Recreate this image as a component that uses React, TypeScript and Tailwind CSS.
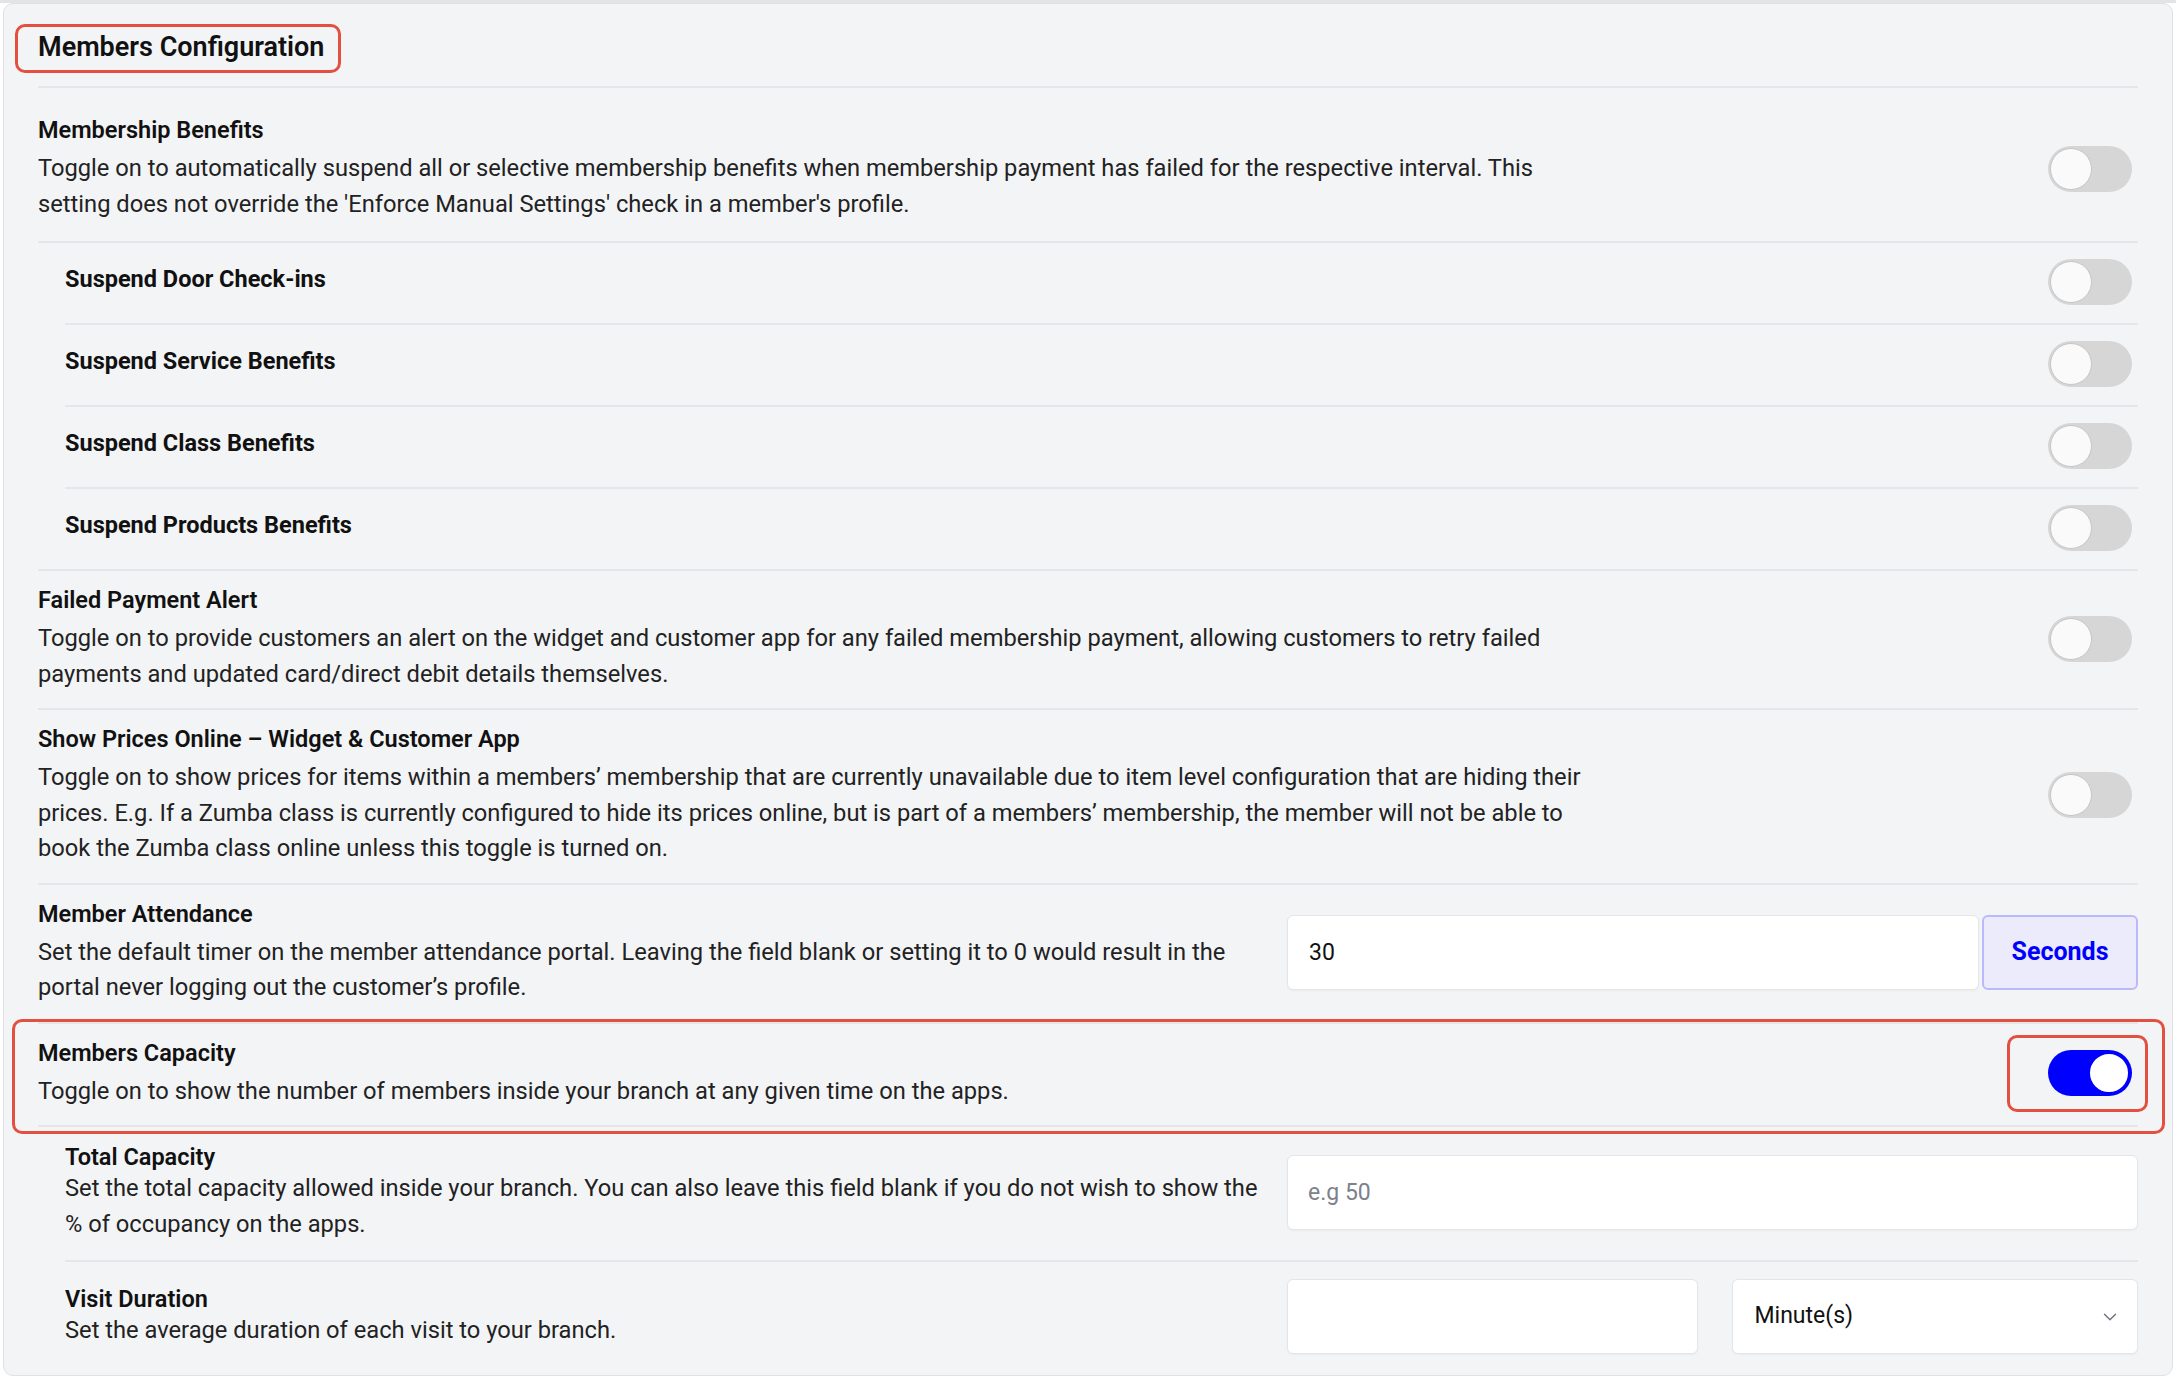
import { ChevronDown } from "lucide-react";

function Toggle({ on = false }: { on?: boolean }) {
  return (
    <div
      className={`flex h-[46px] w-[84px] shrink-0 items-center rounded-full p-[2px] ${
        on ? "justify-end bg-[#0000ff]" : "justify-start bg-[#d6d6d6]"
      }`}
    >
      <div
        className={`h-[42px] w-[42px] rounded-full ${
          on ? "border-2 border-[#0000ff] bg-white" : "border border-[#c6c6c6] bg-[#fafafa]"
        }`}
      />
    </div>
  );
}

const heading = "text-[23.5px] leading-[30px] font-semibold text-[#111]";
const body = "text-[23.7px] leading-[35.5px] text-[#222]";
const divider = "border-b-2 border-[#e4e6e9]";
const field =
  "h-[75px] rounded-[6px] border border-[#e3e5e8] bg-white shadow-[0_1px_2px_rgba(0,0,0,0.04)] text-[23px] text-[#111]";

const subItems = [
  "Suspend Door Check-ins",
  "Suspend Service Benefits",
  "Suspend Class Benefits",
  "Suspend Products Benefits",
];

export default function App() {
  return (
    <div className="min-h-screen border-t-[3px] border-[#e3e4e6] bg-white font-['Roboto',sans-serif]">
      <div className="mx-[3px] rounded-[10px] border border-[#dfe1e4] bg-[#f3f4f6] px-[34px]">
        {/* Header */}
        <div className={`${divider} pt-[26px] pb-[22px]`}>
          <span className="relative inline-block text-[27px] leading-[34px] font-semibold text-[#111]">
            Members Configuration
            <span className="pointer-events-none absolute -left-[23px] -right-[17px] -top-[6px] -bottom-[9px] rounded-[10px] border-[3px] border-[#e4503f]" />
          </span>
        </div>

        {/* Membership Benefits */}
        <div className={`flex items-center justify-between ${divider} pt-[27px] pb-[19px]`}>
          <div className="max-w-[1555px]">
            <div className={heading}>Membership Benefits</div>
            <p className={`${body} mt-[6px]`}>
              Toggle on to automatically suspend all or selective membership benefits when membership payment has
              failed for the respective interval. This setting does not override the 'Enforce Manual Settings' check
              in a member's profile.
            </p>
          </div>
          <div className="mr-[6px]">
            <Toggle />
          </div>
        </div>

        <div className={`${divider} pl-[27px]`}>
          {subItems.map((s, i) => (
            <div
              key={s}
              className={`flex items-center justify-between pt-[16px] pb-[18px] ${
                i < subItems.length - 1 ? divider : ""
              }`}
            >
              <span className="mb-[6px] text-[23.5px] leading-[30px] font-bold text-[#111]">{s}</span>
              <div className="mr-[6px]">
                <Toggle />
              </div>
            </div>
          ))}
        </div>

        {/* Failed Payment Alert */}
        <div className={`flex items-center justify-between ${divider} pt-[14px] pb-[16px]`}>
          <div className="max-w-[1555px]">
            <div className={heading}>Failed Payment Alert</div>
            <p className={`${body} mt-[6px]`}>
              Toggle on to provide customers an alert on the widget and customer app for any failed membership
              payment, allowing customers to retry failed payments and updated card/direct debit details themselves.
            </p>
          </div>
          <div className="mr-[6px]">
            <Toggle />
          </div>
        </div>

        {/* Show Prices Online */}
        <div className={`flex items-center justify-between ${divider} pt-[14px] pb-[16px]`}>
          <div className="max-w-[1555px]">
            <div className={heading}>Show Prices Online – Widget &amp; Customer App</div>
            <p className={`${body} mt-[6px]`}>
              Toggle on to show prices for items within a members’ membership that are currently unavailable due to
              item level configuration that are hiding their prices. E.g. If a Zumba class is currently configured to
              hide its prices online, but is part of a members’ membership, the member will not be able to book the
              Zumba class online unless this toggle is turned on.
            </p>
          </div>
          <div className="mr-[6px]">
            <Toggle />
          </div>
        </div>

        {/* Member Attendance */}
        <div className={`flex items-center gap-[26px] ${divider} pt-[14px] pb-[16px]`}>
          <div className="flex-1">
            <div className={heading}>Member Attendance</div>
            <p className={`${body} mt-[6px]`}>
              Set the default timer on the member attendance portal. Leaving the field blank or setting it to 0 would
              result in the portal never logging out the customer’s profile.
            </p>
          </div>
          <div className="flex w-[851px] shrink-0 gap-[3px]">
            <input readOnly value="30" className={`${field} min-w-0 flex-1 px-[21px] outline-none`} />
            <div className="flex h-[75px] w-[156px] items-center justify-center rounded-[6px] border-2 border-[#b9b9fb] bg-[#ebebfc] text-[25px] font-bold text-[#0000ff]">
              Seconds
            </div>
          </div>
        </div>

        {/* Members Capacity */}
        <div className={`relative flex items-center justify-between ${divider} pt-[14px] pb-[16px]`}>
          <div className="max-w-[1555px]">
            <div className={heading}>Members Capacity</div>
            <p className={`${body} mt-[6px]`}>
              Toggle on to show the number of members inside your branch at any given time on the apps.
            </p>
          </div>
          <div className="relative mr-[6px]">
            <Toggle on />
            <span className="pointer-events-none absolute -left-[41px] -right-[16px] -top-[15px] -bottom-[16px] rounded-[10px] border-[3px] border-[#e4503f]" />
          </div>
          <span className="pointer-events-none absolute -left-[26px] -right-[27px] -top-[5px] -bottom-[9px] rounded-[10px] border-[3px] border-[#e4503f]" />
        </div>

        {/* Capacity sub settings */}
        <div className="pl-[27px]">
          <div className={`flex items-center gap-[20px] ${divider} pt-[16px] pb-[18px]`}>
            <div className="flex-1">
              <div className="text-[23.5px] leading-[28px] font-semibold text-[#111]">Total Capacity</div>
              <p className={body}>
                Set the total capacity allowed inside your branch. You can also leave this field blank if you do not
                wish to show the % of occupancy on the apps.
              </p>
            </div>
            <input
              readOnly
              placeholder="e.g 50"
              className={`${field} w-[851px] shrink-0 px-[20px] outline-none placeholder:text-[#7c818a]`}
            />
          </div>

          <div className="flex items-center gap-[20px] pt-[17px] pb-[21px]">
            <div className="flex-1">
              <div className="text-[23.5px] leading-[28px] font-semibold text-[#111]">Visit Duration</div>
              <p className={body}>Set the average duration of each visit to your branch.</p>
            </div>
            <div className="flex w-[851px] shrink-0 gap-[34px]">
              <input readOnly className={`${field} min-w-0 flex-1 px-[21px] outline-none`} />
              <div className={`${field} flex flex-1 items-center justify-between pl-[22px] pr-[16px]`}>
                <span>Minute(s)</span>
                <ChevronDown size={22} strokeWidth={1.5} className="text-[#6b7280]" />
              </div>
            </div>
          </div>
        </div>
      </div>
    </div>
  );
}
